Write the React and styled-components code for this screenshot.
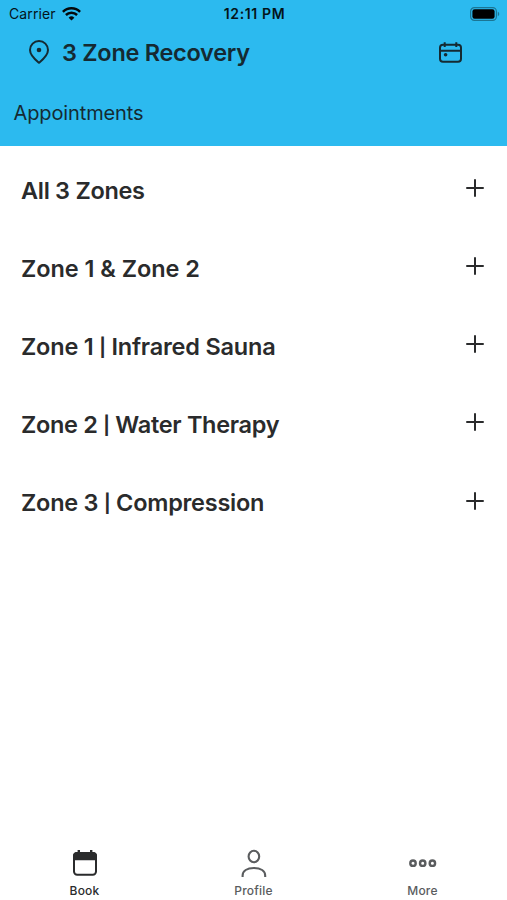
import { useState } from 'react';
import styled, { createGlobalStyle } from 'styled-components';

const colors = {
    brand: '#2cbaef',
    ink: '#2a2b2c',
    headerInk: '#152a32',
    muted: '#5a5c5e',
};

const services = [
    { title: 'All 3 Zones', spacing: '-0.3px' },
    { title: 'Zone 1 & Zone 2', spacing: '-0.06px' },
    { title: 'Zone 1', detail: 'Infrared Sauna', spacing: '-0.21px' },
    { title: 'Zone 2', detail: 'Water Therapy', spacing: '-0.3px' },
    { title: 'Zone 3', detail: 'Compression', spacing: '-0.25px' },
];

const WifiIcon = () => (
    <svg width="19" height="14" viewBox="0 0 19 14" fill="none" stroke="#04090b" strokeWidth="2.5">
        <path d="M0.9 4.9a12.2 12.2 0 0 1 17.2 0" />
        <path d="M3.9 8a8 8 0 0 1 11.2 0" />
        <path d="M9.5 13.6L6.6 10.7a4.1 4.1 0 0 1 5.8 0z" fill="#04090b" stroke="none" />
    </svg>
);

const BatteryIcon = () => (
    <svg width="30" height="14" viewBox="0 0 30 14" fill="none">
        <rect x="0.6" y="0.6" width="25.8" height="12.8" rx="3.8" stroke="#1b7594" strokeWidth="1.2" />
        <rect x="2.4" y="2.3" width="22.2" height="9.4" rx="2.2" fill="#000" />
        <path d="M27.8 4.8c1.9.7 1.9 3.7 0 4.4z" fill="#1b7594" />
    </svg>
);

const PinIcon = () => (
    <svg width="20" height="24" viewBox="0 0 20 24" fill="none" stroke={colors.headerInk} strokeWidth="2">
        <path d="M10 22.8C7 20.3 1 15.6 1 10a9 9 0 0 1 18 0c0 5.6-6 10.3-9 12.8z" strokeLinejoin="round" />
        <circle cx="10" cy="10" r="2.3" fill={colors.headerInk} stroke="none" />
    </svg>
);

const CalendarIcon = () => (
    <svg width="23" height="21" viewBox="0 0 23 21" fill="none" stroke={colors.headerInk} strokeWidth="2">
        <rect x="1" y="2.8" width="21" height="17" rx="3" />
        <path d="M1 8.7h21M5.7 0.2v4.8M17.3 0.2v4.8" />
        <circle cx="6.6" cy="12.8" r="1.8" fill={colors.headerInk} stroke="none" />
    </svg>
);

const PlusIcon = () => (
    <svg width="18" height="18" viewBox="0 0 18 18" stroke={colors.ink} strokeWidth="2" strokeLinecap="round">
        <path d="M1 9h16M9 1v16" />
    </svg>
);

const BookIcon = () => (
    <svg width="26" height="28" viewBox="0 0 26 28" fill="none">
        <rect x="2" y="4" width="22" height="21.8" rx="3.2" stroke={colors.ink} strokeWidth="2" />
        <path d="M1 11.3V7a4 4 0 0 1 4-4h16a4 4 0 0 1 4 4v4.3z" fill={colors.ink} />
        <path d="M6.8 0.9v3M19.2 0.9v3" stroke={colors.ink} strokeWidth="2.4" />
    </svg>
);

const ProfileIcon = () => (
    <svg width="26" height="28" viewBox="0 0 26 28" fill="none" stroke={colors.muted} strokeWidth="2.1">
        <ellipse cx="12.9" cy="7.5" rx="5.3" ry="5.7" />
        <path d="M1.6 28v-1.2c0-4.8 4.5-7.8 11.3-7.8s11.3 3 11.3 7.8V28" />
    </svg>
);

const MoreIcon = () => (
    <svg width="28" height="28" viewBox="0 0 28 28" fill="none" stroke={colors.muted} strokeWidth="2.4">
        <circle cx="4" cy="14.2" r="2.7" />
        <circle cx="13.7" cy="14.2" r="2.7" />
        <circle cx="23.4" cy="14.2" r="2.7" />
    </svg>
);

const tabs = [
    { title: 'Book', Icon: BookIcon },
    { title: 'Profile', Icon: ProfileIcon },
    { title: 'More', Icon: MoreIcon },
];

const App = () => {
    const [activeTab, setActiveTab] = useState('Book');

    return (
        <>
            <GlobalStyle />
            <Screen>
                <Header>
                    <StatusBar>
                        <Carrier>
                            <span>Carrier</span>
                            <WifiIcon />
                        </Carrier>
                        <Clock>12:11 PM</Clock>
                        <Battery>
                            <BatteryIcon />
                        </Battery>
                    </StatusBar>
                    <LocationBar>
                        <PinIcon />
                        <LocationName>3 Zone Recovery</LocationName>
                        <IconButton type="button" aria-label="Calendar">
                            <CalendarIcon />
                        </IconButton>
                    </LocationBar>
                    <SectionTitle>Appointments</SectionTitle>
                </Header>

                <ServiceList>
                    {services.map((s) => (
                        <ServiceRow key={s.title + s.spacing}>
                            <ServiceName $spacing={s.spacing}>
                                {s.title}
                                {s.detail && <> <Pipe>|</Pipe> {s.detail}</>}
                            </ServiceName>
                            <ExpandButton type="button" aria-label="Expand">
                                <PlusIcon />
                            </ExpandButton>
                        </ServiceRow>
                    ))}
                </ServiceList>

                <TabBar>
                    {tabs.map(({ title, Icon }) => (
                        <Tab
                            key={title}
                            type="button"
                            $active={activeTab === title}
                            onClick={() => setActiveTab(title)}
                        >
                            <Icon />
                            <span>{title}</span>
                        </Tab>
                    ))}
                </TabBar>
            </Screen>
        </>
    );
};

export default App;


const GlobalStyle = createGlobalStyle`
    body {
        margin: 0;
        background: #fff;
        font-family: Inter, 'Liberation Sans', sans-serif;
    }

    svg {
        display: block;
        flex-shrink: 0;
    }
`;

const Screen = styled.div`
    display: flex;
    flex-direction: column;
    height: 100vh;
    min-height: 640px;
    background: #fff;
`;

const Header = styled.header`
    box-sizing: border-box;
    height: 146.4px;
    background: ${colors.brand};
    color: ${colors.headerInk};
`;

const StatusBar = styled.div`
    display: grid;
    grid-template-columns: 1fr auto 1fr;
    align-items: center;
    height: 27px;
    padding: 0 7px 0 9px;
    color: #04141a;
    font-size: 14px;
    line-height: 27px;
`;

const Carrier = styled.div`
    display: flex;
    align-items: center;
    gap: 6px;
    letter-spacing: 0.1px;
`;

const Clock = styled.span`
    font-weight: 600;
    letter-spacing: 0.65px;
`;

const Battery = styled.div`
    display: flex;
    justify-content: flex-end;
`;

const LocationBar = styled.div`
    display: flex;
    align-items: center;
    height: 50px;
    padding: 0 45px 0 29px;
`;

const LocationName = styled.h1`
    flex: 1;
    margin: 1px 0 0 13px;
    font-size: 23.5px;
    font-weight: 560;
    line-height: 30px;
    letter-spacing: -0.28px;
`;

const IconButton = styled.button`
    padding: 0;
    border: 0;
    background: transparent;
    cursor: pointer;
`;

const SectionTitle = styled.h2`
    margin: 21px 0 0 13.5px;
    font-size: 20px;
    font-weight: 400;
    line-height: 30px;
    letter-spacing: -0.12px;
`;

const ServiceList = styled.main`
    flex: 1;
    padding-top: 5.1px;
`;

const ServiceRow = styled.div`
    display: flex;
    align-items: center;
    justify-content: space-between;
    height: 78.2px;
    padding: 0 23px 0 21px;
`;

const ServiceName = styled.span`
    color: ${colors.ink};
    font-size: 23.5px;
    font-weight: 560;
    line-height: 30px;
    letter-spacing: ${({ $spacing }) => $spacing};
    white-space: nowrap;
`;

const Pipe = styled.span`
    display: inline-block;
    font-size: 18px;
    font-weight: 700;
    line-height: 1;
    vertical-align: 1px;
`;

const ExpandButton = styled(IconButton)`
    margin-bottom: 5.6px;
`;

const TabBar = styled.nav`
    display: grid;
    grid-template-columns: repeat(3, 1fr);
    height: 51px;
`;

const Tab = styled.button`
    display: flex;
    flex-direction: column;
    align-items: center;
    gap: 6px;
    padding: 0;
    border: 0;
    background: transparent;
    color: ${({ $active }) => ($active ? colors.ink : colors.muted)};
    font-family: inherit;
    font-size: 12px;
    font-weight: 500;
    line-height: 16px;
    letter-spacing: 0.2px;
    cursor: pointer;
`;
